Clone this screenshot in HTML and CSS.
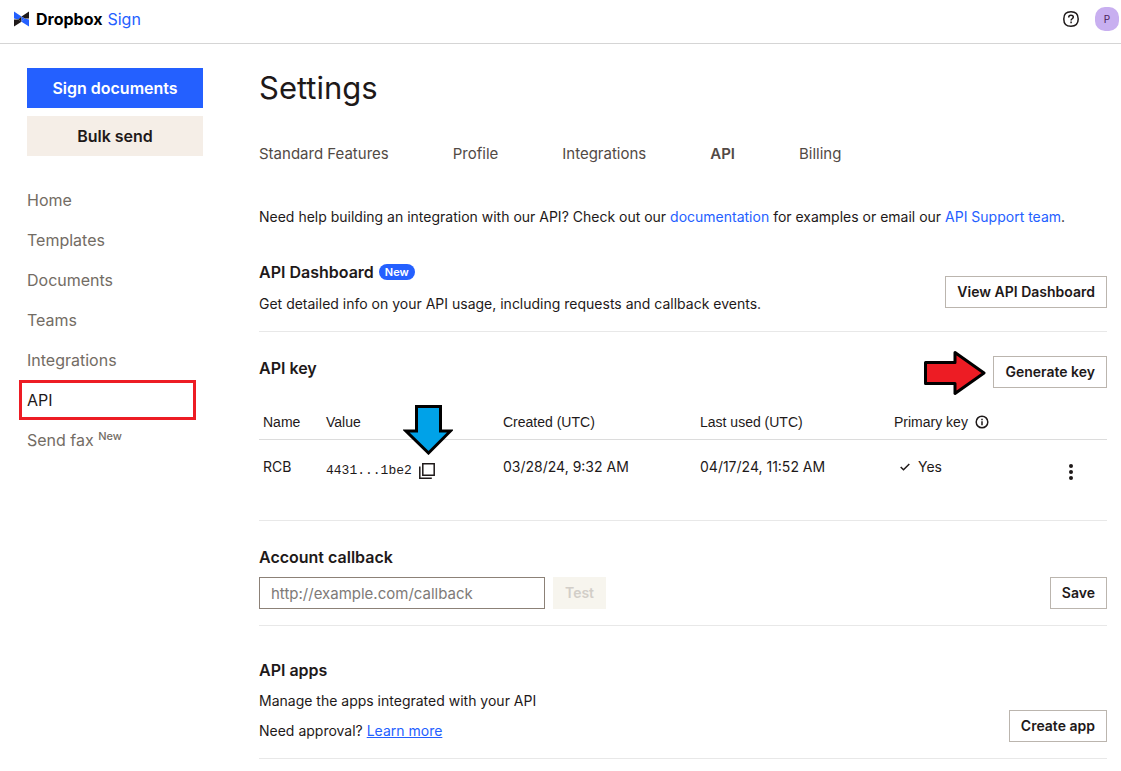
FILE: index.html
```html
<!DOCTYPE html>
<html lang="en">
<head>
<meta charset="utf-8">
<title>Dropbox Sign - API settings</title>
<link rel="stylesheet" href="styles.css">
</head>
<body>
<header class="topbar">
  <a class="brand" href="#">
    <svg class="brand-mark" viewBox="0 0 16 16" aria-hidden="true">
      <path fill="#2460ff" d="M0 0 8 5.200 4.500 8.500 0 7.500zM16 16 8 10.800 11.500 7.500 16 8.500z"/>
      <path fill="#1e1919" d="M16 0v7.500l-4.500 0L8 5.200zM0 16V8.500l4.500 0L8 10.800z"/>
      <path fill="#1e1919" d="M8 5.200 4.500 8.500 8 10.800z"/>
      <path fill="#2460ff" d="M8 5.200 11.500 7.500 8 10.800z"/>
    </svg>
    <span class="brand-name">Dropbox</span>
    <span class="brand-product">Sign</span>
  </a>
  <div class="topbar-tools">
    <button class="icon-button" type="button" aria-label="Help">
      <svg width="16" height="16" viewBox="0 0 16 16" fill="none" stroke="#1e1919" stroke-width="1.500" aria-hidden="true">
        <path d="M8 .8c5 0 7.200 2.200 7.200 7.200S13 15.200 8 15.200.8 13 .8 8 3 .8 8 .8z"/>
        <path d="M5.700 6.400C5.700 4.900 6.600 4.200 8 4.200s2.300.7 2.300 1.900c0 1.700-2.200 1.600-2.200 3.400"/>
        <path d="M8.100 10.600v1.700"/>
      </svg>
    </button>
    <button class="avatar" type="button" aria-label="Account">P</button>
  </div>
</header>
<div class="layout">
  <aside class="sidebar">
    <button class="side-button side-button-primary" type="button">Sign documents</button>
    <button class="side-button" type="button">Bulk send</button>
    <nav class="side-nav">
      <a href="#">Home</a>
      <a href="#">Templates</a>
      <a href="#">Documents</a>
      <a href="#">Teams</a>
      <a href="#">Integrations</a>
      <a class="current" href="#">API</a>
      <a href="#">Send fax <sup>New</sup></a>
    </nav>
  </aside>
  <main class="content">
    <h1>Settings</h1>
    <nav class="tabs">
      <a href="#">Standard Features</a>
      <a href="#">Profile</a>
      <a href="#">Integrations</a>
      <a class="current" href="#">API</a>
      <a href="#">Billing</a>
    </nav>
    <p class="intro">Need help building an integration with our API? Check out our <a href="#">documentation</a> for examples or email our <a href="#">API Support team</a>.</p>

    <section class="section dashboard">
      <div>
        <h2>API Dashboard <span class="badge">New</span></h2>
        <p>Get detailed info on your API usage, including requests and callback events.</p>
      </div>
      <button class="button" type="button">View API Dashboard</button>
    </section>

    <section class="section keys">
      <div class="keys-head">
        <h2>API key</h2>
        <div class="generate">
          <svg class="arrow-right" width="62" height="46" viewBox="0 0 62 46" aria-hidden="true">
            <path d="M1.500 12.500H31V2.500L60 23 31 43.500V33.500H1.500z" fill="#ed1c24" stroke="#000" stroke-width="3" stroke-linejoin="round"/>
          </svg>
          <button class="button" type="button">Generate key</button>
        </div>
      </div>
      <table class="key-table">
        <thead>
          <tr>
            <th class="col-name">Name</th>
            <th class="col-value">Value</th>
            <th class="col-created">Created (UTC)</th>
            <th class="col-used">Last used (UTC)</th>
            <th class="col-primary"><span class="with-icon">Primary key
              <svg width="14" height="14" viewBox="0 0 14 14" fill="none" stroke="#1e1919" stroke-width="1.500" aria-hidden="true">
                <circle cx="7" cy="7" r="5.800"/>
                <path d="M7 6.200v4M7 3.800v1.400"/>
              </svg></span></th>
            <th class="col-menu"></th>
          </tr>
        </thead>
        <tbody>
          <tr>
            <td>RCB</td>
            <td>
              <span class="key-value"><code>4431...1be2</code>
                <button class="icon-button copy" type="button" aria-label="Copy key">
                  <svg width="16" height="16" viewBox="0 0 16 16" fill="none" stroke="#1e1919" stroke-width="1.500" aria-hidden="true">
                    <path d="M3.800.8h11.400v11.400H3.800z"/>
                    <path d="M.8 3.500v11.700h12"/>
                  </svg>
                </button>
                <svg class="arrow-down" width="50" height="50" viewBox="0 0 50 50" aria-hidden="true">
                  <path d="M13.500 1.500h24V26H47.500L25.500 48 3 26h10.500z" fill="#00a2e8" stroke="#000" stroke-width="3"/>
                </svg>
              </span>
            </td>
            <td>03/28/24, 9:32 AM</td>
            <td>04/17/24, 11:52 AM</td>
            <td><span class="with-icon yes">
              <svg width="10" height="8" viewBox="0 0 10 8" fill="none" stroke="#1e1919" stroke-width="1.500" aria-hidden="true"><path d="M.7 4 3.500 6.800 9.300 1"/></svg>
              Yes</span></td>
            <td>
              <button class="icon-button menu" type="button" aria-label="Key actions">
                <svg width="4" height="16" viewBox="0 0 4 16" fill="#1e1919" aria-hidden="true"><circle cx="2" cy="2" r="2"/><circle cx="2" cy="8" r="2"/><circle cx="2" cy="14" r="2"/></svg>
              </button>
            </td>
          </tr>
        </tbody>
      </table>
    </section>

    <section class="section callback">
      <h2><label for="callback">Account callback</label></h2>
      <div class="callback-row">
        <input id="callback" type="text" placeholder="http://example.com/callback">
        <button class="button button-muted" type="button" disabled>Test</button>
        <button class="button save" type="button">Save</button>
      </div>
    </section>

    <section class="section apps">
      <div>
        <h2>API apps</h2>
        <p>Manage the apps integrated with your API</p>
        <p>Need approval? <a class="underlined" href="#">Learn more</a></p>
      </div>
      <button class="button" type="button">Create app</button>
    </section>
  </main>
</div>
</body>
</html>
```
FILE: styles.css
```css
* {
  box-sizing: border-box;
}

body {
  margin: 0;
  background: #fff;
  color: #1e1919;
  font: 14px/20px Inter, "Liberation Sans", sans-serif;
}

a {
  color: #2460ff;
  text-decoration: none;
}

button,
input {
  font: inherit;
  color: inherit;
}

svg {
  display: block;
}

h1,
h2,
p {
  margin: 0;
}

.topbar {
  display: flex;
  justify-content: space-between;
  height: 44px;
  padding: 0 2px 0 14px;
  border-bottom: 1px solid #d5d5d5;
}

.brand {
  display: flex;
  align-items: center;
  gap: 5px;
  padding-bottom: 5px;
  font-size: 16px;
}

.brand-mark {
  width: 15px;
  height: 16px;
  margin-right: 2px;
}

.brand-name {
  color: #000;
  font-weight: 700;
}

.topbar-tools {
  display: flex;
  align-items: center;
  gap: 16px;
  padding-bottom: 5px;
}

.icon-button {
  padding: 0;
  border: 0;
  background: none;
}

.avatar {
  width: 24px;
  height: 24px;
  padding: 0;
  border: 0;
  border-radius: 10px;
  background: #c8aff0;
  color: #4b1d5c;
  font-size: 10px;
}

.layout {
  display: flex;
  gap: 56px;
  padding: 24px 14px 12px 27px;
}

.sidebar {
  display: flex;
  flex: 0 0 176px;
  flex-direction: column;
  gap: 8px;
}

.side-button {
  height: 40px;
  border: 0;
  background: #f5eee7;
  font-size: 16px;
  font-weight: 600;
}

.side-button-primary {
  background: #2460ff;
  color: #fff;
}

.side-nav {
  display: flex;
  flex-direction: column;
  margin: 16px 7px 0 -8px;
  font-size: 16px;
}

.side-nav a {
  height: 40px;
  padding: 0 8px;
  color: #736c64;
  line-height: 40px;
}

.side-nav .current {
  padding: 0 5px;
  border: 3px solid #ed1c24;
  color: #1e1919;
  line-height: 34px;
}

.side-nav sup {
  font-size: 11px;
  font-weight: 500;
  line-height: 1;
}

.content {
  flex: 1;
  min-width: 0;
}

h1 {
  font-size: 31px;
  font-weight: 400;
  line-height: 40px;
}

.tabs {
  display: flex;
  gap: 64px;
  margin-top: 36px;
  font-size: 15px;
}

.tabs a {
  color: #524a45;
}

.tabs .current {
  font-weight: 600;
}

.intro {
  margin-top: 43px;
}

.section {
  padding: 24px 0 12px;
  border-bottom: 1px solid #e8e8e8;
}

h2 {
  display: flex;
  align-items: center;
  gap: 5px;
  font-size: 16px;
  font-weight: 600;
  line-height: 24px;
}

.badge {
  padding: 0 6px;
  border-radius: 8px;
  background: #2460ff;
  color: #fff;
  font-size: 11px;
  line-height: 16px;
}

.button {
  height: 32px;
  padding: 0 11px;
  border: 1px solid #bbb5ae;
  background: #fff;
  font-weight: 600;
  white-space: nowrap;
}

.dashboard,
.apps {
  display: flex;
  align-items: flex-end;
  justify-content: space-between;
}

.section p {
  line-height: 30px;
}

.dashboard {
  padding-top: 33px;
}

.dashboard h2 {
  margin-bottom: 5px;
}

.dashboard .button {
  margin-bottom: 11px;
}

.keys {
  padding-bottom: 0;
}

.keys-head {
  display: flex;
  align-items: flex-start;
  justify-content: space-between;
}

.generate {
  position: relative;
}

.arrow-right {
  position: absolute;
  top: -6px;
  right: calc(100% + 7px);
}

.key-table {
  width: 100%;
  margin-top: 16px;
  border-collapse: collapse;
  table-layout: fixed;
}

.key-table th {
  height: 35px;
  padding: 2px 4px 0;
  border-bottom: 1px solid #dcdcdc;
  font-family: "Liberation Sans", Arial, sans-serif;
  font-weight: 400;
  text-align: left;
}

.key-table td {
  height: 81px;
  padding: 17px 4px 0;
  vertical-align: top;
}

.col-name {
  width: 63px;
}

.col-value {
  width: 177px;
}

.col-created {
  width: 197px;
}

.col-used {
  width: 194px;
}

.col-menu {
  width: 80px;
}

.with-icon {
  display: flex;
  align-items: center;
  gap: 7px;
}

.yes {
  gap: 8px;
  padding-left: 6px;
}

.key-value {
  position: relative;
  display: flex;
  align-items: center;
  gap: 7px;
  width: max-content;
  padding-top: 4px;
}

.key-value code {
  font: 13px/20px "Liberation Mono", monospace;
}

.arrow-down {
  position: absolute;
  right: -18px;
  bottom: 26px;
}

.menu {
  margin: 7px 0 0 38px;
}

.callback {
  padding-bottom: 16px;
}

.callback-row {
  display: flex;
  gap: 8px;
  margin-top: 8px;
}

.callback input {
  width: 286px;
  height: 32px;
  padding: 0 11px;
  border: 1px solid #8c8177;
  background: #fff;
  font-size: 15px;
}

.callback input::placeholder {
  color: #7e7a77;
  opacity: 1;
}

.button-muted {
  border-color: #f7f5ee;
  background: #f7f5ee;
  color: #d2cec8;
}

.save {
  margin-left: auto;
}

.apps {
  padding-top: 32px;
}

.apps h2 {
  margin-bottom: 4px;
}

.apps .button {
  margin-bottom: 4px;
}

.underlined {
  text-decoration: underline;
}
```
